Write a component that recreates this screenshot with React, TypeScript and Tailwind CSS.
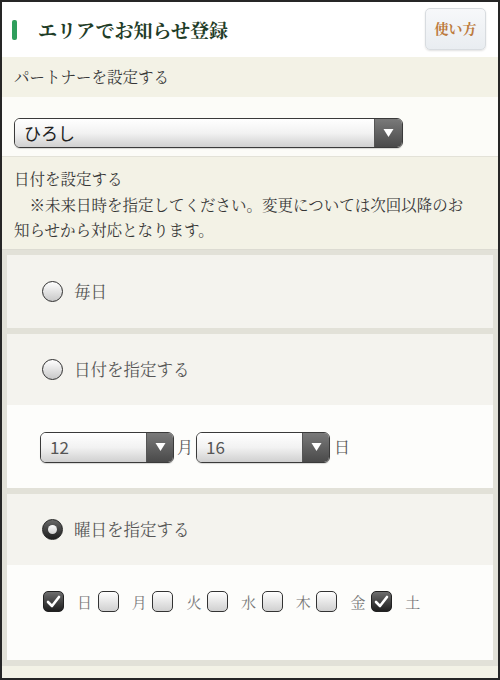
import React from "react";

const serif = { fontFamily: '"Noto Serif CJK JP", "Noto Sans CJK JP", serif' };

function Arrow() {
  return (
    <svg width="11" height="10" viewBox="0 0 11 10">
      <path d="M0.5 1 L10.5 1 L5.5 9 Z" fill="#ffffff" />
    </svg>
  );
}

function Select({ value, w, h, arrowW, textCls }: { value: string; w: string; h: string; arrowW: string; textCls: string }) {
  return (
    <div className={`${w} ${h} flex rounded-[6px] border border-[#3a3a3a] overflow-hidden shadow-[0_1px_1px_rgba(0,0,0,0.15)]`}>
      <div className={`flex-1 flex items-center bg-gradient-to-b from-[#ffffff] via-[#f2f2f2] to-[#d0d0d0] ${textCls}`} style={{ fontFamily: '"Noto Sans CJK JP", "Liberation Sans", sans-serif' }}>
        {value}
      </div>
      <div className={`${arrowW} flex items-center justify-center bg-gradient-to-b from-[#7a7a7a] to-[#4a4a4a] border-l border-[#555]`}>
        <Arrow />
      </div>
    </div>
  );
}

function Radio({ checked }: { checked?: boolean }) {
  if (checked) {
    return (
      <div className="w-[21px] h-[21px] rounded-full bg-gradient-to-b from-[#6a6a6a] to-[#1e1e1e] border border-[#222] flex items-center justify-center">
        <div className="w-[9px] h-[9px] rounded-full bg-gradient-to-b from-[#ffffff] to-[#cfcfcf]" />
      </div>
    );
  }
  return <div className="w-[21px] h-[21px] rounded-full border-[1.5px] border-[#2e2e2e] bg-gradient-to-b from-[#ffffff] to-[#c8c8c8]" />;
}

function Check({ checked }: { checked?: boolean }) {
  if (checked) {
    return (
      <div className="w-[21px] h-[21px] rounded-[5px] border border-[#222] bg-gradient-to-b from-[#6e6e6e] to-[#1f1f1f] flex items-center justify-center">
        <svg width="15" height="13" viewBox="0 0 15 13">
          <path d="M2 7 L6 11 L13 2" fill="none" stroke="#ffffff" strokeWidth="2.6" strokeLinecap="round" strokeLinejoin="round" />
        </svg>
      </div>
    );
  }
  return <div className="w-[21px] h-[21px] rounded-[5px] border-[1.5px] border-[#333] bg-gradient-to-b from-[#ffffff] to-[#d0d0d0]" />;
}

const days: { d: string; c: boolean }[] = [
  { d: "日", c: true },
  { d: "月", c: false },
  { d: "火", c: false },
  { d: "水", c: false },
  { d: "木", c: false },
  { d: "金", c: false },
  { d: "土", c: true },
];

export default function App() {
  return (
    <div className="w-[500px] h-[680px] overflow-hidden border-2 border-[#262626] bg-[#f3f2e8] flex flex-col" style={serif}>
      {/* header */}
      <div className="h-[55px] bg-white flex items-center justify-between pl-[10px] pr-[12px] shrink-0">
        <div className="flex items-center">
          <div className="w-[5px] h-[20px] rounded-[2px] bg-[#2f9e5c]" />
          <div className="ml-[21px] text-[19px] font-bold text-[#1f3d28] leading-none">エリアでお知らせ登録</div>
        </div>
        <div className="w-[61px] h-[42px] rounded-[5px] border border-[#d8dce0] bg-gradient-to-b from-[#f7f8fa] to-[#e9edf1] flex items-center justify-center shadow-[0_1px_2px_rgba(0,0,0,0.12)] mt-[-2px]">
          <span className="text-[14px] font-bold text-[#bd7b3e]">使い方</span>
        </div>
      </div>

      {/* partner */}
      <div className="h-[40px] bg-[#f3f2e6] flex items-center pl-[12px] text-[15.5px] text-[#363636] shrink-0">パートナーを設定する</div>
      <div className="h-[60px] bg-[#fcfcf8] flex items-start pt-[21px] pl-[12px] border-b border-[#e3e2d8] shrink-0">
        <Select value="ひろし" w="w-[389px]" h="h-[30px]" arrowW="w-[28px]" textCls="pl-[9px] text-[17px] text-[#222]" />
      </div>

      {/* date text */}
      <div className="bg-[#f3f2e6] pl-[12px] pt-[9px] pb-[6px] text-[15.5px] leading-[25.5px] text-[#363636] shrink-0">
        <div>日付を設定する</div>
        <div>　※未来日時を指定してください。変更については次回以降のお</div>
        <div>知らせから対応となります。</div>
      </div>

      {/* options */}
      <div className="bg-[#e2e1d8] px-[5px] pt-[5px] pb-[6px] flex flex-col gap-[6px] shrink-0 border-t border-[#dcdbd2]">
        <div className="h-[73px] bg-[#f4f3ee] flex items-center pl-[35px]">
          <Radio />
          <span className="ml-[11px] text-[16.5px] text-[#555]">毎日</span>
        </div>

        <div className="flex flex-col">
          <div className="h-[71px] bg-[#f4f3ee] flex items-center pl-[35px]">
            <Radio />
            <span className="ml-[11px] text-[16.5px] text-[#555]">日付を指定する</span>
          </div>
          <div className="h-[83px] bg-[#fdfdfb] flex items-center pl-[33px] pt-[2px]">
            <Select value="12" w="w-[134px]" h="h-[31px]" arrowW="w-[27px]" textCls="pl-[9px] text-[17px] text-[#555]" />
            <span className="mx-[3px] text-[16px] text-[#555]">月</span>
            <Select value="16" w="w-[134px]" h="h-[31px]" arrowW="w-[27px]" textCls="pl-[9px] text-[17px] text-[#555]" />
            <span className="ml-[4px] text-[16px] text-[#555]">日</span>
          </div>
        </div>

        <div className="flex flex-col">
          <div className="h-[71px] bg-[#f4f3ee] flex items-center pl-[35px]">
            <Radio checked />
            <span className="ml-[11px] text-[16.5px] text-[#555]">曜日を指定する</span>
          </div>
          <div className="h-[95px] bg-[#fdfdfb] flex items-start pt-[26px] pl-[36px]">
            {days.map((x) => (
              <div key={x.d} className="w-[54.7px] flex items-center shrink-0">
                <Check checked={x.c} />
                <span className="ml-[13px] text-[15px] text-[#777]">{x.d}</span>
              </div>
            ))}
          </div>
        </div>
      </div>
      <div className="flex-1 bg-[#f3f2e6]" />
    </div>
  );
}
